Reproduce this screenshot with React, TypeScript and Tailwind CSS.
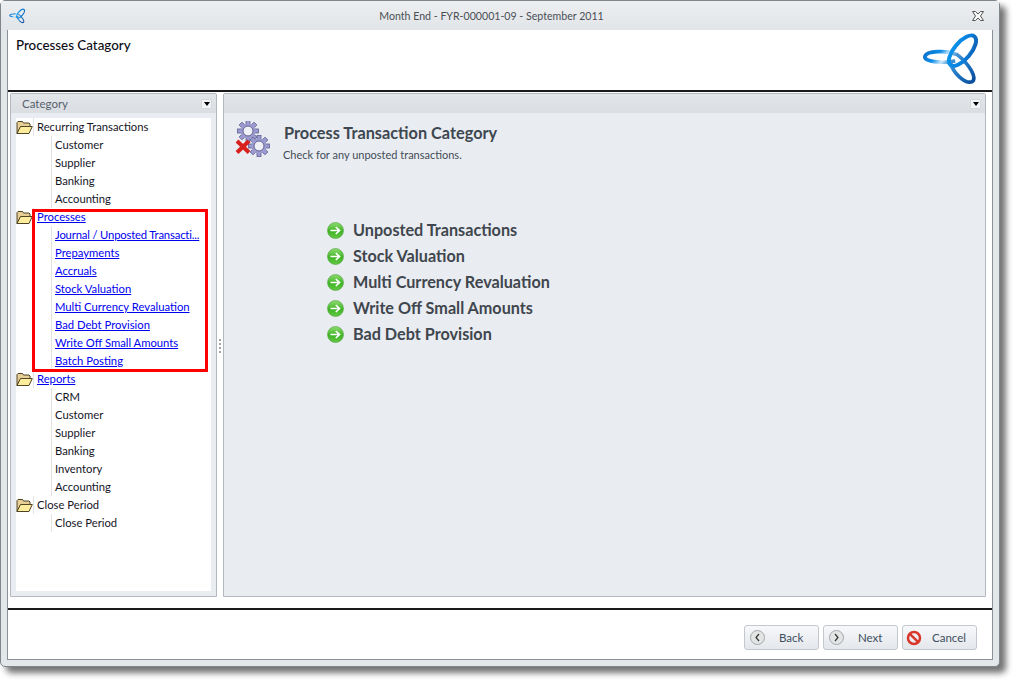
import React from "react";

const tree = [
  { name: "Recurring Transactions", items: ["Customer", "Supplier", "Banking", "Accounting"] },
  {
    name: "Processes",
    link: true,
    items: [
      "Journal / Unposted Transacti...",
      "Prepayments",
      "Accruals",
      "Stock Valuation",
      "Multi Currency Revaluation",
      "Bad Debt Provision",
      "Write Off Small Amounts",
      "Batch Posting",
    ],
  },
  { name: "Reports", link: true, items: ["CRM", "Customer", "Supplier", "Banking", "Inventory", "Accounting"] },
  { name: "Close Period", items: ["Close Period"] },
];

const steps = [
  "Unposted Transactions",
  "Stock Valuation",
  "Multi Currency Revaluation",
  "Write Off Small Amounts",
  "Bad Debt Provision",
];

function Logo({ size }: { size: number }) {
  const a = `logo-a-${size}`;
  const b = `logo-b-${size}`;
  const c = `logo-c-${size}`;
  return (
    <svg width={size} height={size} viewBox="4 3 54 54" fill="none">
      <defs>
        <linearGradient id={a} x1="0" y1="0" x2="1" y2="1">
          <stop offset="0" stopColor="#0a97ee" />
          <stop offset="0.6" stopColor="#0a7fdc" />
          <stop offset="1" stopColor="#0f5aa8" />
        </linearGradient>
        <linearGradient id={b} x1="0" y1="0" x2="1" y2="0.300">
          <stop offset="0" stopColor="#0a6fc8" />
          <stop offset="0.45" stopColor="#0f8ee8" />
          <stop offset="0.75" stopColor="#cfe9fb" />
          <stop offset="1" stopColor="#3a90d0" />
        </linearGradient>
        <linearGradient id={c} x1="0" y1="0" x2="1" y2="1">
          <stop offset="0" stopColor="#5a9ed8" />
          <stop offset="0.5" stopColor="#1e78c4" />
          <stop offset="1" stopColor="#0b4c9c" />
        </linearGradient>
      </defs>
      <path d="M37 25.500C28 21.500 8.500 22 6.800 27.500 5.500 32.500 22 34.500 36 32" stroke={`url(#${b})`} strokeWidth="3.500" />
      <path d="M31.500 33C33.500 44 46 54 52 52 58 49 50 35 37 25" stroke={`url(#${c})`} strokeWidth="3.500" />
      <ellipse cx="43" cy="22" rx="18" ry="8" transform="rotate(-50 43 22)" stroke={`url(#${a})`} strokeWidth="3.800" />
    </svg>
  );
}

function Folder() {
  return (
    <svg width="17" height="15" viewBox="0 0 17 15" className="shrink-0">
      <path d="M1 13.500V2.500l1-1h4.500l1 1.500h5.500l1 1v2.500H5z" fill="#e8cf96" stroke="#4a4020" strokeWidth="1" />
      <path d="M1 13.500 4.500 6.500H16.300l-3.300 7z" fill="#fcec9c" stroke="#4f4424" strokeWidth="1" strokeLinejoin="round" />
    </svg>
  );
}

function Gear({ x, y, r }: { x: number; y: number; r: number }) {
  const teeth = [0, 45, 90, 135, 180, 225, 270, 315];
  return (
    <g transform={`translate(${x} ${y})`}>
      {teeth.map((a) => (
        <rect key={a} x={-r * 0.2} y={-r * 1.05} width={r * 0.4} height={r * 0.4} fill="#9c9cd0" stroke="#5f5f94" strokeWidth="0.800" transform={`rotate(${a})`} />
      ))}
      <circle r={r * 0.76} fill="#9c9cd0" />
      <circle r={r * 0.5} fill="#eef0f5" stroke="#5f5f94" strokeWidth="1" />
    </g>
  );
}

function GearsIcon() {
  return (
    <svg width="36" height="38" viewBox="0 0 36 38" className="mt-[2px] shrink-0">
      <Gear x={13} y={10} r={10} />
      <Gear x={24} y={25} r={10} />
      <path d="M2 20 L14 31.500 M14 20 L2 31.500" stroke="#d8201c" strokeWidth="4" />
    </svg>
  );
}

function GreenArrow() {
  return (
    <svg width="17" height="17" viewBox="0 0 17 17" className="shrink-0">
      <defs>
        <linearGradient id="ga" x1="0" y1="0" x2="0" y2="1">
          <stop offset="0" stopColor="#8fdc70" />
          <stop offset="0.55" stopColor="#3fb426" />
          <stop offset="1" stopColor="#63c943" />
        </linearGradient>
      </defs>
      <circle cx="8.500" cy="8.500" r="8" fill="url(#ga)" stroke="#4f9f3d" strokeWidth="0.600" />
      <path d="M3.500 8.500H12M8.800 5 12.500 8.500 8.800 12" fill="none" stroke="#fff" strokeWidth="1.700" />
    </svg>
  );
}

function Dropdown() {
  return (
    <div className="w-[11px] h-[10px] bg-[#f2f4f6] border border-[#d4d8dc] rounded-[1px] flex items-center justify-center">
      <div className="w-0 h-0 border-l-[3.500px] border-r-[3.500px] border-t-[4px] border-l-transparent border-r-transparent border-t-black" />
    </div>
  );
}

function NavButton({ label, dir }: { label: string; dir: "back" | "next" }) {
  return (
    <button className="w-[75px] h-[25px] flex items-center pl-[5px] rounded-[3px] border border-[#c3c8ce] bg-gradient-to-b from-[#f7f8fa] to-[#e4e7eb] text-[#3d4f60]">
      <span className="w-[15px] h-[15px] rounded-full border border-[#a5a8ac] bg-[#e3e4e4] flex items-center justify-center">
        <svg width="7" height="9" viewBox="0 0 7 9" fill="none" stroke="#333" strokeWidth="1.200">
          <path d={dir === "back" ? "M5 1 2 4.500 5 8" : "M2 1 5 4.500 2 8"} />
        </svg>
      </span>
      <span className="ml-[14px]">{label}</span>
    </button>
  );
}

export default function App() {
  return (
    <div className="relative w-[1016px] h-[683px] bg-white overflow-hidden font-['Lato','Liberation_Sans',sans-serif] text-[11.500px] leading-[18px]">
      {/* window */}
      <div className="w-[1000px] h-[667px] flex flex-col rounded-[5px] border border-[#7e868c] bg-[#e4e7ea] shadow-[6px_6px_6px_rgba(0,0,0,0.55)]">
        <div className="h-[29px] shrink-0 flex items-center pl-[8px] pr-[15px] bg-gradient-to-b from-[#eceef0] to-[#e2e5e8]">
          <Logo size={16} />
          <div className="flex-1 text-center text-[10.600px] text-[#4a4f55] pr-[14px]">Month End - FYR-000001-09 - September 2011</div>
          <svg width="12" height="10" viewBox="0 0 12 10" fill="#f6f6f6" stroke="#555" strokeWidth="1">
            <path d="M.5.500h3l2.500 2.500L8.500.500h3L8.500 5l3 4.500h-3L6 7 3.500 9.500h-3L3.500 5z" />
          </svg>
        </div>

        <div className="mx-[6px] w-[986px] h-[630px] flex flex-col bg-white border border-t-0 border-[#8b9196]">
          <div className="h-[62px] shrink-0 flex justify-between border-b-2 border-[#1a1a1a] pl-[8px] pr-[14px]">
            <div className="pt-[6px] text-[13.350px] font-medium text-[#0c0c14]">Processes Catagory</div>
            <div className="pt-[1px]">
              <Logo size={56} />
            </div>
          </div>

          <div className="flex-1 min-h-0 flex px-[2px] pt-[1px] pb-[10px]">
            {/* category panel */}
            <div className="w-[207px] h-[504px] flex flex-col bg-[#e9ecf1] border border-[#b3b8bf] rounded-t-[2px]">
              <div className="h-[19px] shrink-0 flex items-center justify-between pl-[11px] pr-[4px] bg-gradient-to-b from-[#e3e6e9] to-[#dadde1] text-[#55616e]">
                <span>Category</span>
                <Dropdown />
              </div>
              <div className="mx-[5px] mt-[5px] w-[195px] h-[473px] bg-white text-[11.250px]">
                {tree.map((group) => (
                  <div key={group.name}>
                    <div className="h-[18px] flex items-center">
                      <Folder />
                      <span className={`self-stretch border-l border-[#e4e4e4] pl-[3px] ${group.link ? "text-[#0000f0] underline" : "text-[#15151f]"}`}>
                        {group.name}
                      </span>
                    </div>
                    <div className="ml-[35px] border-l border-[#e2e2e2] pl-[3px]">
                      {group.items.map((item) => (
                        <div
                          key={item}
                          className={`h-[18px] whitespace-nowrap ${item.endsWith("...") ? "tracking-[-0.160px]" : ""} ${group.name === "Processes" ? "text-[#0000f0] underline" : "text-[#15151f]"}`}
                        >
                          {item}
                        </div>
                      ))}
                    </div>
                  </div>
                ))}
              </div>
            </div>

            {/* splitter */}
            <div className="w-[6px] flex flex-col items-center justify-center gap-[2px]">
              <div className="w-[2px] h-[2px] bg-[#a0a4a8]" />
              <div className="w-[2px] h-[2px] bg-[#a0a4a8]" />
              <div className="w-[2px] h-[2px] bg-[#a0a4a8]" />
              <div className="w-[2px] h-[2px] bg-[#a0a4a8]" />
            </div>

            {/* main panel */}
            <div className="w-[763px] h-[504px] flex flex-col bg-[#e9ecf1] border border-[#b3b8bf] rounded-t-[2px]">
              <div className="h-[19px] shrink-0 flex items-center justify-end pr-[4px] bg-gradient-to-b from-[#e3e6e9] to-[#dadde1]">
                <Dropdown />
              </div>
              <div className="flex pl-[11px] pt-[6px]">
                <GearsIcon />
                <div className="ml-[12px]">
                  <div className="text-[16.300px] leading-[22px] pt-[3px] pl-[1px] font-bold text-[#3e4750]">Process Transaction Category</div>
                  <div className="text-[#434d57] text-[11px] mt-[2px]">Check for any unposted transactions.</div>
                </div>
              </div>
              <div className="ml-[103px] mt-[53px] flex flex-col">
                {steps.map((step) => (
                  <div key={step} className="h-[26px] flex items-center gap-[9px]">
                    <GreenArrow />
                    <span className="text-[16.200px] font-bold text-[#3f464d]">{step}</span>
                  </div>
                ))}
              </div>
            </div>
          </div>

          <div className="h-[51px] shrink-0 flex items-start justify-end gap-[4px] border-t-2 border-[#1a1a1a] pt-[15px] pr-[15px]">
            <NavButton label="Back" dir="back" />
            <NavButton label="Next" dir="next" />
            <button className="w-[75px] h-[25px] flex items-center pl-[3px] rounded-[3px] border border-[#c3c8ce] bg-gradient-to-b from-[#f7f8fa] to-[#e4e7eb] text-[#3d4f60]">
              <svg width="16" height="16" viewBox="0 0 16 16" fill="none" stroke="#d8372b" strokeWidth="2.500">
                <circle cx="8" cy="8" r="6" />
                <path d="M3.800 3.800 12.200 12.200" />
              </svg>
              <span className="ml-[10px]">Cancel</span>
            </button>
          </div>
        </div>
      </div>

      {/* red annotation box */}
      <div className="absolute left-[32px] top-[209px] w-[176px] h-[163px] border-[3px] border-[#ff0000]" />
    </div>
  );
}
